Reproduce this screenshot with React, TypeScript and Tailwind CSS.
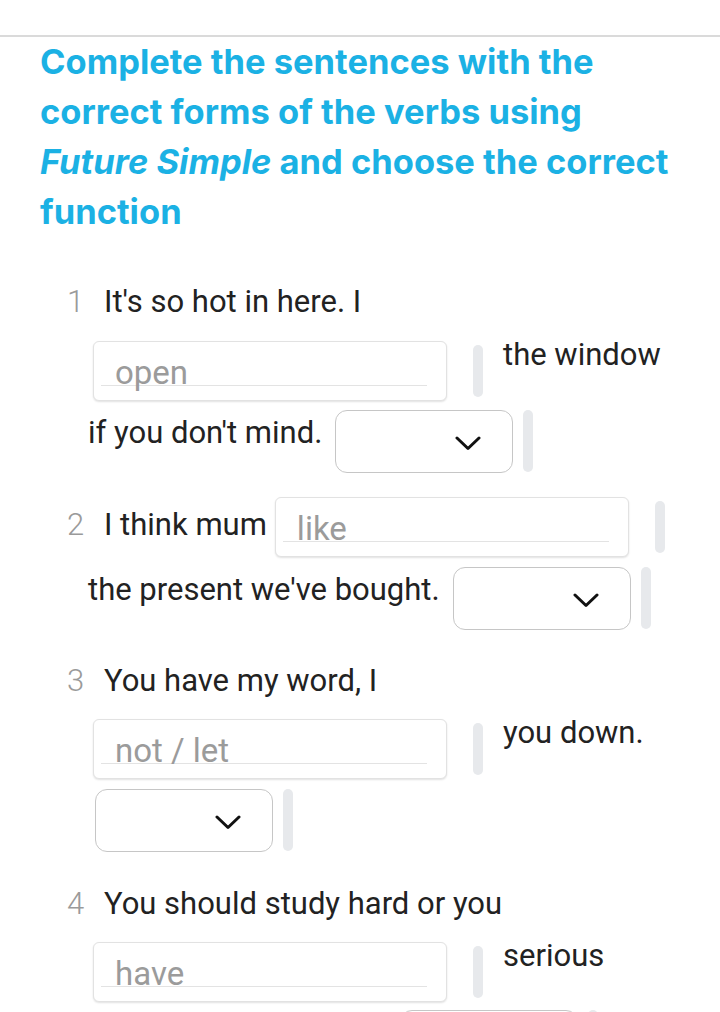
import React from 'react';

const Pill = ({ tall }: { tall?: boolean }) => (
  <div
    className={`w-[10px] shrink-0 rounded-full bg-[#e7e9ec] ${
      tall ? 'h-[62px]' : 'mt-[4px] h-[52px]'
    }`}
  />
);

const GapInput = ({ hint }: { hint: string }) => (
  <div className="flex shrink-0 items-start">
    <div className="h-[60px] w-[354px] rounded-[6px] border border-[#e2e2e2] bg-white shadow-[0_1px_2px_rgba(0,0,0,0.12)]">
      <div className="ml-[7px] mr-[19px] mt-[13px] h-[31px] border-b border-[#e3e3e3] pl-[14px] text-[33px] leading-[35px] text-[#9b9b9b]">
        {hint}
      </div>
    </div>
    <div className="ml-[26px]">
      <Pill />
    </div>
  </div>
);

const Chevron = () => (
  <svg width="26" height="15" viewBox="0 0 26 15" fill="none">
    <polyline
      points="2,2 13,12.5 24,2"
      stroke="#111"
      strokeWidth="3"
      strokeLinecap="round"
      strokeLinejoin="round"
    />
  </svg>
);

const Select = () => (
  <div className="flex shrink-0 items-start gap-[10px]">
    <div className="flex h-[63px] w-[178px] items-center rounded-[12px] border-[1.5px] border-[#c6c6c6] bg-white pl-[119px] pt-[3px]">
      <Chevron />
    </div>
    <Pill tall />
  </div>
);

const Num = ({ n, className = '' }: { n: number; className?: string }) => (
  <span className={`ml-[-21px] w-[37px] shrink-0 font-light text-[#9a9a9a] ${className}`}>{n}</span>
);

export default function App() {
  return (
    <div
      className="min-h-screen bg-white text-[#222]"
      style={{ fontFamily: 'Roboto, "Liberation Sans", sans-serif' }}
    >
      <div className="h-[35px]" />
      <div className="h-[2px] bg-[#dadada]" />

      <h1
        className="whitespace-nowrap px-10 text-[34.5px] font-bold leading-[50px] text-[#1bb1e4]"
        style={{ fontFamily: 'Inter, "Liberation Sans", sans-serif' }}
      >
        Complete the sentences with the
        <br />
        correct forms of the verbs using
        <br />
        <i>Future Simple</i> and choose the correct
        <br />
        function
      </h1>

      <div className="mt-[51px] pl-[88px] text-[31px] leading-[28px]">
        {/* 1 */}
        <div className="flex">
          <Num n={1} />
          <span>It's so hot in here. I</span>
        </div>
        <div className="mt-[25px] flex items-start pl-[5px]">
          <GapInput hint="open" />
          <span className="ml-[20px]">the window</span>
        </div>
        <div className="mt-[9px] flex items-start">
          <span className="mt-[9px]">if you don't mind.</span>
          <div className="ml-[13px]">
            <Select />
          </div>
        </div>

        {/* 2 */}
        <div className="mt-[24px] flex items-start">
          <Num n={2} className="mt-[14px]" />
          <span className="mt-[14px]">I think mum</span>
          <div className="ml-[8px]">
            <GapInput hint="like" />
          </div>
        </div>
        <div className="mt-[10px] flex items-start">
          <span className="mt-[9px]">the present we've bought.</span>
          <div className="ml-[13px]">
            <Select />
          </div>
        </div>

        {/* 3 */}
        <div className="mt-[37px] flex">
          <Num n={3} />
          <span>You have my word, I</span>
        </div>
        <div className="mt-[24px] flex items-start pl-[5px]">
          <GapInput hint="not / let" />
          <span className="ml-[20px]">you down.</span>
        </div>
        <div className="mt-[10px] flex items-start pl-[7px]">
          <Select />
        </div>

        {/* 4 */}
        <div className="mt-[38px] flex">
          <Num n={4} />
          <span>You should study hard or you</span>
        </div>
        <div className="mt-[24px] flex items-start pl-[5px]">
          <GapInput hint="have" />
          <span className="ml-[20px]">serious</span>
        </div>
        <div className="mt-[8px] flex items-start pl-[312px]">
          <Select />
        </div>
        <div className="h-[40px]" />
      </div>
    </div>
  );
}
